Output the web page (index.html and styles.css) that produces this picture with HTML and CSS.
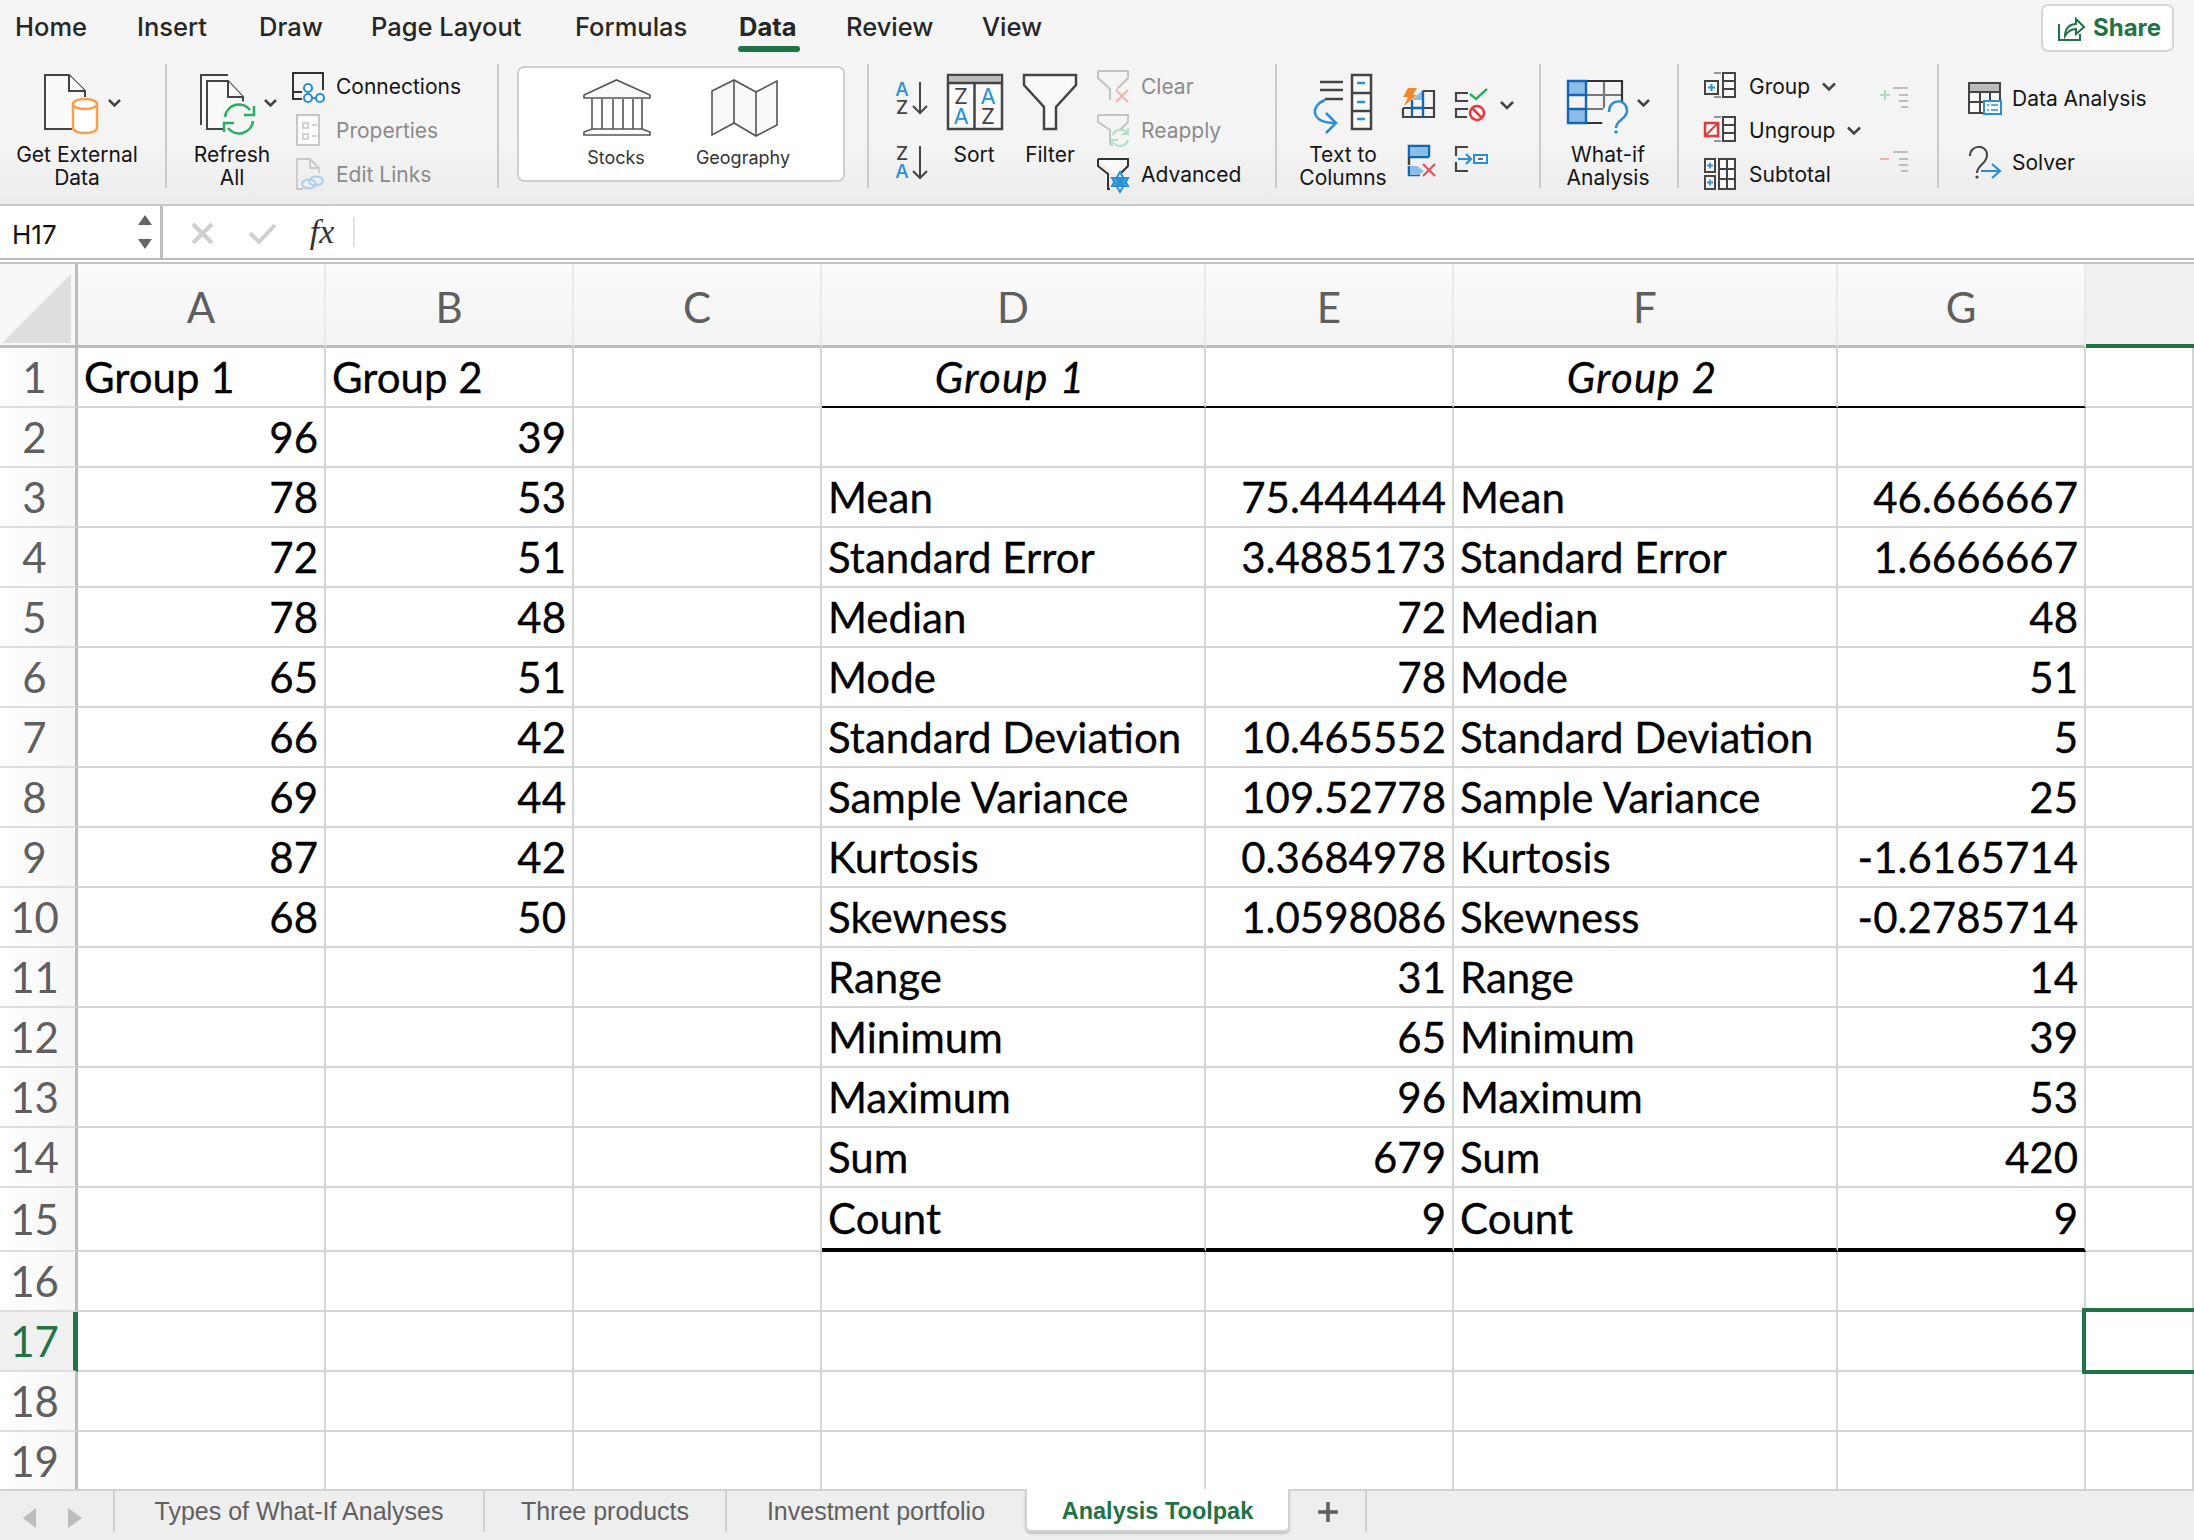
FILE: index.html
```html
<!DOCTYPE html>
<html lang="en">
<head>
<meta charset="utf-8">
<title>Analysis Toolpak</title>
<link rel="stylesheet" href="styles.css">
</head>
<body>
<header class="ribbon">
  <nav class="menu">
    <span class="tab w1">Home</span>
    <span class="tab w2">Insert</span>
    <span class="tab w3">Draw</span>
    <span class="tab w4">Page Layout</span>
    <span class="tab w5">Formulas</span>
    <span class="tab w6 active">Data</span>
    <span class="tab w7">Review</span>
    <span class="tab w8">View</span>
    <button class="share">
      <svg width="28" height="28" viewBox="0 0 28 28"><path d="M2 10v16h21v-6" class="g"/><path d="M8 22c0-8 5-12 11-12V5l8 8-8 7v-5c-5 0-8 2-11 7z" class="g"/></svg>
      <span class="share-text">Share</span>
    </button>
  </nav>
  <div class="tools">
    <section class="group g1">
      <div class="big">
        <svg width="165" height="80" viewBox="0 64 165 80">
          <path d="M72 129H45V75h24l16 16v6" class="doc"/><path d="M69 75v16h16" class="doc"/>
          <path d="M73 104v24a12 5 0 0 0 24 0v-24z" fill="#fff" stroke="#f6a04d" stroke-width="2.5"/>
          <ellipse cx="85" cy="104" rx="12" ry="5" fill="#fff" stroke="#f6a04d" stroke-width="2.5"/>
          <path d="M109 100l5.500 5.500 5.500-5.500" class="chev"/>
        </svg>
        <div class="label">Get External<br>Data</div>
      </div>
    </section>
    <i class="sep"></i>
    <section class="group g2">
      <div class="big refresh">
        <svg width="123" height="80" viewBox="167 64 123 80">
          <path d="M201 125V75h27" class="doc"/>
          <path d="M224 129h-17V81h21l15 16v6" class="doc"/><path d="M228 81v16h15" class="doc"/>
          <circle cx="239" cy="119" r="18" fill="#f5f5f5"/>
          <path d="M225 117a14 14 0 0 1 25-7M253 121a14 14 0 0 1-25 7" fill="none" stroke="#27ae60" stroke-width="2.500"/>
          <path d="M254 106v9h-10M224 132v-9h10" fill="none" stroke="#27ae60" stroke-width="2.500"/>
          <path d="M265 100l5.500 5.500 5.500-5.500" class="chev"/>
        </svg>
        <div class="label">Refresh<br>All</div>
      </div>
      <div class="stack">
        <div class="item">
          <svg width="46" height="44" viewBox="290 64 46 44">
            <path d="M323 90V73h-30v26h9M293 92h9" fill="none" stroke="#333" stroke-width="2"/>
            <g fill="#fff" stroke="#2b8fd6" stroke-width="2.200"><path d="M308 92v2M312 98h4"/><circle cx="308" cy="88" r="4"/><circle cx="308" cy="98" r="4"/><circle cx="320" cy="98" r="4"/></g>
          </svg><span>Connections</span>
        </div>
        <div class="item off">
          <svg width="46" height="44" viewBox="290 108 46 44">
            <rect x="297" y="115" width="22" height="30" fill="#fafafa" stroke="#c8c8c8" stroke-width="2"/>
            <path d="M303 123h5v5h-5zM303 134h5v5h-5zM312 125h5M312 136h5" fill="none" stroke="#c8c8c8" stroke-width="1.500"/>
          </svg><span>Properties</span>
        </div>
        <div class="item off">
          <svg width="46" height="44" viewBox="290 152 46 44">
            <path d="M303 189h-6v-30h13l9 9v5M310 159v9h9" fill="none" stroke="#c8c8c8" stroke-width="1.800"/>
            <g fill="none" stroke="#a9d0ea" stroke-width="2"><ellipse cx="309" cy="184" rx="7" ry="4.500"/><ellipse cx="316" cy="181" rx="7" ry="4.500"/></g>
          </svg><span>Edit Links</span>
        </div>
      </div>
    </section>
    <i class="sep"></i>
    <section class="group g3">
      <div class="gallery">
        <div class="gal-item gi1">
          <svg width="96" height="79" viewBox="568 68 96 79">
            <g fill="#fafafa" stroke="#555" stroke-width="1.600">
              <path d="M592 99v30M602 99v30M613 99v30M623 99v30M633 99v30M642 99v30"/>
              <path d="M584 95l32.500-15 33.500 15v3h-66z"/><path d="M592 129h50l8 3v3h-66v-3z"/>
            </g>
          </svg>
          <div class="gal-label">Stocks</div>
        </div>
        <div class="gal-item gi2">
          <svg width="126" height="79" viewBox="680 68 126 79">
            <path d="M712 91l22-11 22 12 21-11v44l-21 11-22-13-22 12z" fill="#f9f9f9" stroke="#555" stroke-width="1.600"/>
            <path d="M734 80v43M756 92v44" stroke="#555" stroke-width="1.600"/>
          </svg>
          <div class="gal-label">Geography</div>
        </div>
      </div>
    </section>
    <i class="sep"></i>
    <section class="group g4">
      <svg class="azs" width="73" height="124" viewBox="869 64 73 124">
        <text x="902" y="96" class="ltr blue">A</text><text x="902" y="114" class="ltr dark">Z</text>
        <path d="M920 82v31M913 106l7 7 7-7" class="arr"/>
        <text x="902" y="160" class="ltr dark">Z</text><text x="902" y="178" class="ltr blue">A</text>
        <path d="M920 146v32M913 171l7 7 7-7" class="arr"/>
      </svg>
      <div class="big sort">
        <svg width="64" height="80" viewBox="942 64 64 80">
          <rect x="948" y="75" width="54" height="54" fill="#fafafa" stroke="#444" stroke-width="2.500"/>
          <rect x="949" y="76" width="52" height="6" fill="#bbb"/>
          <path d="M948 83h54M974.500 83v46" stroke="#444" stroke-width="2.500"/>
          <text x="961" y="104" class="ltr2 dark">Z</text><text x="961" y="124" class="ltr2 blue">A</text>
          <text x="988" y="104" class="ltr2 blue">A</text><text x="988" y="124" class="ltr2 dark">Z</text>
        </svg>
        <div class="label">Sort</div>
      </div>
      <div class="big filter">
        <svg width="88" height="80" viewBox="1006 64 88 80">
          <path d="M1024 75h52v10l-20 22v22h-12v-22l-20-22z" fill="#fafafa" stroke="#444" stroke-width="2.500"/>
        </svg>
        <div class="label">Filter</div>
      </div>
      <div class="stack">
        <div class="item off">
          <svg width="47" height="44" viewBox="1094 64 47 44">
            <path d="M1098 71h30v7l-11 11M1110 100v-11l-12-11v-7" fill="none" stroke="#c4c4c4" stroke-width="2"/>
            <path d="M1116 90l12 12M1128 90l-12 12" stroke="#f2b3b5" stroke-width="2"/>
          </svg><span>Clear</span>
        </div>
        <div class="item off">
          <svg width="47" height="44" viewBox="1094 108 47 44">
            <path d="M1098 115h30v7l-8 8M1110 145v-15l-12-8v-7" fill="none" stroke="#c4c4c4" stroke-width="2"/>
            <path d="M1113 135a8 8 0 0 1 14-2M1128 140a8 8 0 0 1-14 3M1128 128v6h-6M1112 146v-6h6" fill="none" stroke="#aee0c2" stroke-width="2"/>
          </svg><span>Reapply</span>
        </div>
        <div class="item">
          <svg width="47" height="44" viewBox="1094 152 47 44">
            <path d="M1098 159h30v7l-10 10M1110 189h-2v-15l-10-8v-7" fill="#fafafa" stroke="#333" stroke-width="2"/>
            <g fill="none" stroke="#2b8fd6" stroke-width="2"><path d="M1120 172l8 14h-16zM1120 192l-8-14h16z" fill="#fafafa"/><circle cx="1120" cy="182" r="3" fill="#2b8fd6"/></g>
          </svg><span>Advanced</span>
        </div>
      </div>
    </section>
    <i class="sep"></i>
    <section class="group g5">
      <div class="big ttc">
        <svg width="124" height="80" viewBox="1277 64 124 80">
          <path d="M1320 82h23M1320 90h23M1325 99h18" stroke="#444" stroke-width="2.500"/>
          <rect x="1352" y="75" width="19" height="54" fill="#fafafa" stroke="#444" stroke-width="2.500"/>
          <path d="M1352 93h19M1352 111h19" stroke="#444" stroke-width="2.500"/>
          <path d="M1357 83h8M1357 102h8M1357 119h8" stroke="#2b8fd6" stroke-width="2.500"/>
          <path d="M1325 100c-15 6-15 23 11 23M1326 113l10 10-10 10" fill="none" stroke="#2b8fd6" stroke-width="2.500"/>
        </svg>
        <div class="label">Text to<br>Columns</div>
      </div>
      <svg class="dtools" width="138" height="124" viewBox="1401 64 138 124">
        <path d="M1412 100l11-10v10z" fill="#8bbde8"/>
        <path d="M1423 91h11v26h-31v-9M1412 108h-9M1423 108h11M1412 117h11" fill="none" stroke="#444" stroke-width="2.200"/>
        <path d="M1412 100v17M1423 91v26M1412 108h11" fill="none" stroke="#1565b0" stroke-width="2.400"/>
        <path d="M1408 88h9l-4 7h4l-13 11 4-9h-5z" fill="#f08a2c"/>
        <path d="M1409 157v8" stroke="#444" stroke-width="2.500"/>
        <path d="M1409 157v-11h20v11M1429 157h-20M1409 166v9h11" fill="none" stroke="#1565b0" stroke-width="2.500"/>
        <rect x="1410" y="147" width="18" height="9" fill="#8bbde8"/>
        <path d="M1410 166h7l7 5-5 4h-9z" fill="#8bbde8"/>
        <path d="M1423 164l12 12M1435 164l-12 12" stroke="#e8505a" stroke-width="2.200"/>
        <path d="M1468 93h-12v8h12M1468 109h-12v8h11" fill="none" stroke="#444" stroke-width="2.200"/>
        <path d="M1470 94l6 5 11-10" fill="none" stroke="#27ae60" stroke-width="2.400"/>
        <circle cx="1477" cy="113" r="7" fill="#fafafa" stroke="#e8373f" stroke-width="2.500"/><path d="M1472 108l10 10" stroke="#e8373f" stroke-width="2.500"/>
        <path d="M1468 147h-12v9M1456 162v9h12" fill="none" stroke="#444" stroke-width="2.200"/>
        <rect x="1474" y="155" width="13" height="8" fill="#fff" stroke="#2b8fd6" stroke-width="2"/>
        <path d="M1478 159h5" stroke="#557" stroke-width="1.800"/>
        <path d="M1458 159h13M1466 154l5 5-5 5" fill="none" stroke="#2b8fd6" stroke-width="2.200"/>
        <path d="M1501 102l6 6 6-6" class="chev"/>
      </svg>
    </section>
    <i class="sep"></i>
    <section class="group g6">
      <div class="big whatif">
        <svg width="136" height="80" viewBox="1543 64 136 80">
          <path d="M1588 95h37M1588 109h37M1606 81v42" fill="none" stroke="#777" stroke-width="2.200"/>
          <path d="M1588 81h36v42h-36" fill="none" stroke="#333" stroke-width="2.200"/>
          <rect x="1570" y="82" width="18" height="13" fill="#8bbde8"/><rect x="1570" y="109" width="18" height="14" fill="#8bbde8"/>
          <path d="M1570 81h18v42h-18zM1570 95h18M1570 109h18" fill="none" stroke="#1565b0" stroke-width="2.400"/>
          <circle cx="1618" cy="117" r="15" fill="#f5f5f5"/>
          <path d="M1611 112c0-14 18-14 18-1 0 8-11 9-11 17" fill="none" stroke="#2b8fd6" stroke-width="2.500"/><circle cx="1618" cy="132" r="1.800" fill="#2b8fd6"/>
          <path d="M1640 100l5.500 5.500 5.500-5.500" class="chev"/>
        </svg>
        <div class="label">What-if<br>Analysis</div>
      </div>
    </section>
    <i class="sep"></i>
    <section class="group g7">
      <div class="stack">
        <div class="item">
          <svg width="70" height="44" viewBox="1680 64 70 44">
            <path d="M1715 73h7M1715 97h7" stroke="#777" stroke-width="1.500"/>
            <rect x="1706" y="81" width="13" height="13" fill="#fafafa" stroke="#444" stroke-width="2"/><path d="M1709 87.500h7M1712.500 84v7" stroke="#2b8fd6" stroke-width="2"/>
            <path d="M1724 73h12v24h-12zM1724 81h12M1724 89h12" fill="#fafafa" stroke="#444" stroke-width="2"/>
          </svg><span>Group</span><svg class="ichev" width="14" height="10" viewBox="0 0 14 10"><path d="M1 1.500l6 6 6-6" class="chev"/></svg>
        </div>
        <div class="item">
          <svg width="70" height="44" viewBox="1680 108 70 44">
            <path d="M1715 117h7M1715 141h7" stroke="#777" stroke-width="1.500"/>
            <rect x="1706" y="123" width="13" height="13" fill="#fafafa" stroke="#e8373f" stroke-width="2.500"/><path d="M1707 135l11-11" stroke="#e8373f" stroke-width="2"/>
            <path d="M1724 117h12v24h-12zM1724 125h12M1724 133h12" fill="#fafafa" stroke="#444" stroke-width="2"/>
          </svg><span>Ungroup</span><svg class="ichev" width="14" height="10" viewBox="0 0 14 10"><path d="M1 1.500l6 6 6-6" class="chev"/></svg>
        </div>
        <div class="item">
          <svg width="70" height="44" viewBox="1680 152 70 44">
            <path d="M1706 159h10v13h-10zM1706 176h10v13h-10zM1720 159h16v30h-16zM1720 169h16M1720 179h16M1728 159v30" fill="#fafafa" stroke="#444" stroke-width="2"/>
            <path d="M1708 165.500h6M1711 162.500v6M1708 182.500h6M1711 179.500v6" stroke="#2b8fd6" stroke-width="1.800"/>
          </svg><span>Subtotal</span>
        </div>
      </div>
      <svg class="detail" width="63" height="124" viewBox="1874 64 63 124">
        <path d="M1880 95h10M1885 90v10" stroke="#a9dfc0" stroke-width="2"/>
        <path d="M1893 88h15M1899 95h9M1899 101h9M1901 107h7" stroke="#bdbdbd" stroke-width="2"/>
        <path d="M1880 159h9" stroke="#f2b3b5" stroke-width="2"/>
        <path d="M1893 152h15M1899 159h9M1899 165h9M1901 171h7" stroke="#bdbdbd" stroke-width="2"/>
      </svg>
    </section>
    <i class="sep"></i>
    <section class="group g8">
      <div class="item">
        <svg width="73" height="44" viewBox="1938 76 73 44">
          <path d="M1968 83h31v30h-31zM1968 92h31M1968 102h31M1979 92v21M1989 92v21" fill="#fafafa" stroke="#444" stroke-width="2"/>
          <rect x="1969" y="84" width="29" height="7" fill="#bbb"/>
          <rect x="1983" y="101" width="17" height="13" fill="#fff" stroke="#2b8fd6" stroke-width="2"/>
          <path d="M1986 105h2M1986 110h2M1990 105h7M1990 110h7" stroke="#2b8fd6" stroke-width="1.600"/>
        </svg><span>Data Analysis</span>
      </div>
      <div class="item">
        <svg width="73" height="44" viewBox="1938 140 73 44">
          <path d="M1969 156c0-12 17-12 17-1 0 9-10 10-10 18" fill="none" stroke="#444" stroke-width="2"/><circle cx="1976" cy="177" r="1.600" fill="#444"/>
          <path d="M1980 171h19M1991 164l8 7-8 7" fill="none" stroke="#2b8fd6" stroke-width="2.200"/>
        </svg><span>Solver</span>
      </div>
    </section>
  </div>
</header>

<div class="formula">
  <div class="namebox">
    <span class="name-text">H17</span>
    <svg width="16" height="40" viewBox="0 0 16 40"><path d="M8 3l7 10H1zM8 37L1 27h14z" fill="#666"/></svg>
  </div>
  <svg class="fbtns" width="140" height="52" viewBox="163 206 140 52">
    <path d="M193 224l19 19M212 224l-19 19" stroke="#cfcfcf" stroke-width="4"/>
    <path d="M250 233l9 9 16-17" fill="none" stroke="#cfcfcf" stroke-width="4"/>
  </svg>
  <span class="fx">fx</span>
  <i class="fdiv"></i>
</div>

<main class="sheet">
  <table class="grid">
    <colgroup><col class="c0"><col class="cs"><col class="cs"><col class="cs"><col class="cl"><col class="cs"><col class="cl"><col class="cs"><col class="ce"></colgroup>
    <thead>
      <tr class="hr">
        <th class="corner"><svg width="72" height="72" viewBox="0 0 72 72"><path d="M71 2v69H2z" fill="#dedede"/></svg></th>
        <th>A</th><th>B</th><th>C</th><th>D</th><th>E</th><th>F</th><th>G</th><th class="hsel"></th>
      </tr>
    </thead>
    <tbody>
      <tr><th>1</th><td>Group 1</td><td>Group 2</td><td></td><td class="ctr rule">Group 1</td><td class="rule"></td><td class="ctr rule">Group 2</td><td class="rule"></td><td></td></tr>
      <tr><th>2</th><td class="n">96</td><td class="n">39</td><td></td><td></td><td></td><td></td><td></td><td></td></tr>
      <tr><th>3</th><td class="n">78</td><td class="n">53</td><td></td><td>Mean</td><td class="n">75.444444</td><td>Mean</td><td class="n">46.666667</td><td></td></tr>
      <tr><th>4</th><td class="n">72</td><td class="n">51</td><td></td><td>Standard Error</td><td class="n">3.4885173</td><td>Standard Error</td><td class="n">1.6666667</td><td></td></tr>
      <tr><th>5</th><td class="n">78</td><td class="n">48</td><td></td><td>Median</td><td class="n">72</td><td>Median</td><td class="n">48</td><td></td></tr>
      <tr><th>6</th><td class="n">65</td><td class="n">51</td><td></td><td>Mode</td><td class="n">78</td><td>Mode</td><td class="n">51</td><td></td></tr>
      <tr><th>7</th><td class="n">66</td><td class="n">42</td><td></td><td>Standard Deviation</td><td class="n">10.465552</td><td>Standard Deviation</td><td class="n">5</td><td></td></tr>
      <tr><th>8</th><td class="n">69</td><td class="n">44</td><td></td><td>Sample Variance</td><td class="n">109.52778</td><td>Sample Variance</td><td class="n">25</td><td></td></tr>
      <tr><th>9</th><td class="n">87</td><td class="n">42</td><td></td><td>Kurtosis</td><td class="n">0.3684978</td><td>Kurtosis</td><td class="n">-1.6165714</td><td></td></tr>
      <tr><th>10</th><td class="n">68</td><td class="n">50</td><td></td><td>Skewness</td><td class="n">1.0598086</td><td>Skewness</td><td class="n">-0.2785714</td><td></td></tr>
      <tr><th>11</th><td></td><td></td><td></td><td>Range</td><td class="n">31</td><td>Range</td><td class="n">14</td><td></td></tr>
      <tr><th>12</th><td></td><td></td><td></td><td>Minimum</td><td class="n">65</td><td>Minimum</td><td class="n">39</td><td></td></tr>
      <tr><th>13</th><td></td><td></td><td></td><td>Maximum</td><td class="n">96</td><td>Maximum</td><td class="n">53</td><td></td></tr>
      <tr><th>14</th><td></td><td></td><td></td><td>Sum</td><td class="n">679</td><td>Sum</td><td class="n">420</td><td></td></tr>
      <tr class="tall"><th>15</th><td></td><td></td><td></td><td class="rule2">Count</td><td class="n rule2">9</td><td class="rule2">Count</td><td class="n rule2">9</td><td></td></tr>
      <tr><th>16</th><td></td><td></td><td></td><td></td><td></td><td></td><td></td><td></td></tr>
      <tr><th class="rsel">17</th><td></td><td></td><td></td><td></td><td></td><td></td><td></td><td></td></tr>
      <tr><th>18</th><td></td><td></td><td></td><td></td><td></td><td></td><td></td><td></td></tr>
      <tr><th>19</th><td></td><td></td><td></td><td></td><td></td><td></td><td></td><td></td></tr>
    </tbody>
  </table>
  <div class="selection"></div>
</main>

<footer class="sheets">
  <div class="nav">
    <svg width="80" height="26" viewBox="0 0 80 26"><path d="M14 3v20L1 13zM46 3v20l14-10z" fill="#bdbdbd"/></svg>
  </div>
  <span class="st s1">Types of What-If Analyses</span>
  <span class="st s2">Three products</span>
  <span class="st s3">Investment portfolio</span>
  <span class="st s4">Analysis Toolpak</span>
  <span class="st s5"><svg width="22" height="22" viewBox="0 0 22 22"><path d="M11 1v20M1 11h20" stroke="#5f5f5f" stroke-width="3.500"/></svg></span>
</footer>
</body>
</html>
```

FILE: styles.css
```css
* { box-sizing: border-box; }
html, body { margin: 0; padding: 0; }
body {
  width: 2194px; height: 1540px; overflow: hidden;
  display: flex; flex-direction: column;
  font-family: Inter, "Liberation Sans", sans-serif;
  background: #fff; color: #111;
}
svg { display: block; flex: none; }
i { display: block; font-style: normal; }

/* ribbon */
.ribbon {
  height: 206px; flex: none;
  background: linear-gradient(#f5f5f5, #f4f4f4 70%, #ececec);
  border-bottom: 2px solid #c9c9c9;
}
.menu { height: 64px; display: flex; align-items: flex-start; padding-left: 15px; }
.tab { height: 54px; line-height: 54px; font-size: 25.5px; font-weight: 500; color: #262626; position: relative; flex: none; }
.w1 { width: 122px; } .w2 { width: 122px; } .w3 { width: 112px; } .w4 { width: 204px; }
.w5 { width: 164px; } .w6 { width: 107px; } .w7 { width: 136px; } .w8 { width: 60px; }
.tab.active { font-weight: 700; }
.tab.active::after {
  content: ""; position: absolute; left: -1px; top: 46px; width: 62px; height: 6px;
  border-radius: 3px; background: #217346;
}
.share {
  margin: 4px 20px 0 auto; width: 133px; height: 48px; padding: 0 0 0 14px;
  display: flex; align-items: center; gap: 8px;
  background: #fff; border: 2px solid #d6d6d6; border-radius: 7px;
  font: 700 24px Inter, "Liberation Sans", sans-serif; color: #217346;
}
.share-text { margin-top: -2px; }
.g { fill: none; stroke: #217346; stroke-width: 2; }

.tools { display: flex; align-items: flex-start; height: 124px; }
.sep { width: 2px; height: 124px; background: #cbcbcb; flex: none; }
.group { display: flex; align-items: flex-start; height: 124px; flex: none; }
.g1 { width: 165px; } .g2 { width: 330px; } .g3 { width: 368px; padding-left: 18px; }
.g4 { width: 406px; } .g5 { width: 262px; } .g6 { width: 136px; } .g7 { width: 258px; }
.g8 { flex-direction: column; gap: 20px; padding-top: 12px; flex: 1; }

.big { flex: none; display: flex; flex-direction: column; }
.label { font-size: 21px; line-height: 23px; margin-top: -1px; text-align: center; color: #141414; white-space: nowrap; }
.g1 .big { width: 165px; }
.g1 .label { padding-right: 11px; }
.refresh { width: 123px; } .refresh .label { padding-left: 7px; }
.sort { width: 64px; } .filter { width: 88px; }
.ttc { width: 124px; } .ttc .label { padding-left: 8px; }
.whatif { width: 136px; } .whatif .label { padding-right: 2px; }

.stack { display: flex; flex-direction: column; flex: none; }
.item { display: flex; align-items: center; height: 44px; font-size: 21px; color: #141414; white-space: nowrap; }
.item.off { color: #8b8b8b; }
.ichev { margin: 2px 0 0 12px; }
.detail { margin-left: auto; }
.doc { fill: #fafafa; stroke: #444; stroke-width: 2; }
.chev { fill: none; stroke: #444; stroke-width: 2.500; }
.arr { fill: none; stroke: #444; stroke-width: 2; }
.ltr { font: 500 19px Inter, sans-serif; text-anchor: middle; }
.ltr2 { font: 400 22px Inter, sans-serif; text-anchor: middle; }
.blue { fill: #2b8fd6; } .dark { fill: #444; }

.gallery {
  width: 328px; height: 116px; margin-top: 2px; padding-left: 49px;
  display: flex; gap: 16px;
  background: #fff; border: 2px solid #cfcfcf; border-radius: 7px;
}
.gal-item { flex: none; }
.gi1 { width: 96px; } .gi2 { width: 126px; }
.gal-label { font-size: 18px; line-height: 22px; text-align: center; color: #333; }

/* formula bar */
.formula { height: 52px; flex: none; display: flex; align-items: center; background: #fff; }
.namebox {
  width: 163px; height: 52px; flex: none; padding: 0 7px 0 12px;
  display: flex; align-items: center; justify-content: space-between;
  border-right: 3px solid #bdbdbd; font-size: 26px; color: #111;
}
.name-text { padding-top: 4px; }
.fx { width: 38px; margin-right: 12px; flex: none; text-align: center; font: italic 34px "Liberation Serif", serif; color: #333; }
.fdiv { width: 2px; height: 30px; background: #e2e2e2; }

/* sheet */
.sheet {
  flex: 1; min-height: 0; position: relative; overflow: hidden;
  border-top: 2px solid #bdbdbd;
}
.sheet::before { content: ""; display: block; height: 2px; background: #fff; }
.sheet::after { content: ""; position: absolute; left: 0; right: 0; top: 2px; height: 2px; background: #c4c4c4; }
.grid {
  width: 2194px; table-layout: fixed; border-collapse: separate; border-spacing: 0;
  font-family: Lato, "Liberation Sans", sans-serif; font-size: 42px; color: #000;
}
.c0 { width: 78px; } .cs { width: 248px; } .cl { width: 384px; } .ce { width: 108px; }
.grid tr { height: 60px; }
.grid tr.hr { height: 86px; }
.grid tr.tall { height: 64px; }
.grid td, .grid th {
  padding: 0; font-weight: 400; line-height: 1; white-space: nowrap; overflow: hidden;
}
.grid td {
  padding: 0 6px; border-right: 2px solid #d4d4d4; border-bottom: 2px solid #d4d4d4;
  -webkit-text-stroke: 0.3px #000;
}
.grid td.n { text-align: right; }
.grid td.ctr { text-align: center; font-style: italic; letter-spacing: 1.2px; padding-right: 12px; }
.grid td.rule { border-bottom-color: #000; }
.grid td.rule2 { border-bottom: 4px solid #000; }
.grid thead th {
  padding-top: 6px;
  background: linear-gradient(#fbfbfb, #f3f3f3); color: #5f5f5f;
  border-right: 2px solid #e9e9e9; border-bottom: 3px solid #bdbdbd;
}
.grid thead th.corner { padding: 8px 0 0; background: #f8f8f8; border-right: 3px solid #bdbdbd; vertical-align: middle; }
.grid thead th.hsel { background: #f0f0f0; border-right: 0; border-bottom: 4px solid #217346; }
.grid tbody th {
  padding-right: 6px;
  background: linear-gradient(90deg, #fff, #f6f6f6); color: #5f5f5f; text-align: center;
  border-right: 3px solid #bdbdbd; border-bottom: 2px solid #ddd;
}
.grid tbody th.rsel { color: #217346; background: #f0f0f0; border-right: 5px solid #217346; padding-right: 4px; }
.selection {
  position: absolute; left: 2082px; top: 1048px; width: 140px; height: 66px;
  border: 4px solid #217346;
}

/* sheet tabs */
.sheets {
  height: 51px; flex: none; position: relative; z-index: 1;
  display: flex; align-items: flex-start;
  background: #eeeeee; border-top: 2px solid #d2d2d2;
  color: #606060; font: 25px "Liberation Sans", sans-serif;
}
.nav { width: 113px; height: 49px; padding: 14px 0 0 22px; flex: none; }
.st {
  height: 41px; flex: none; display: flex; align-items: center; justify-content: center;
  border-left: 2px solid #d2d2d2; white-space: nowrap;
}
.s1 { width: 370px; } .s2 { width: 242px; } .s3 { width: 300px; }
.s4 {
  width: 265px; height: 43px; margin-top: -2px; padding-top: 3px; background: #fff; color: #217346; font-weight: 700; font-size: 23.5px;
  border: 2px solid #d2d2d2; border-top: 0; border-radius: 0 0 6px 6px;
  box-shadow: 0 2px 2px rgba(0,0,0,.18);
}
.s5 { width: 77px; border-left: 0; border-right: 2px solid #d2d2d2; }
```
